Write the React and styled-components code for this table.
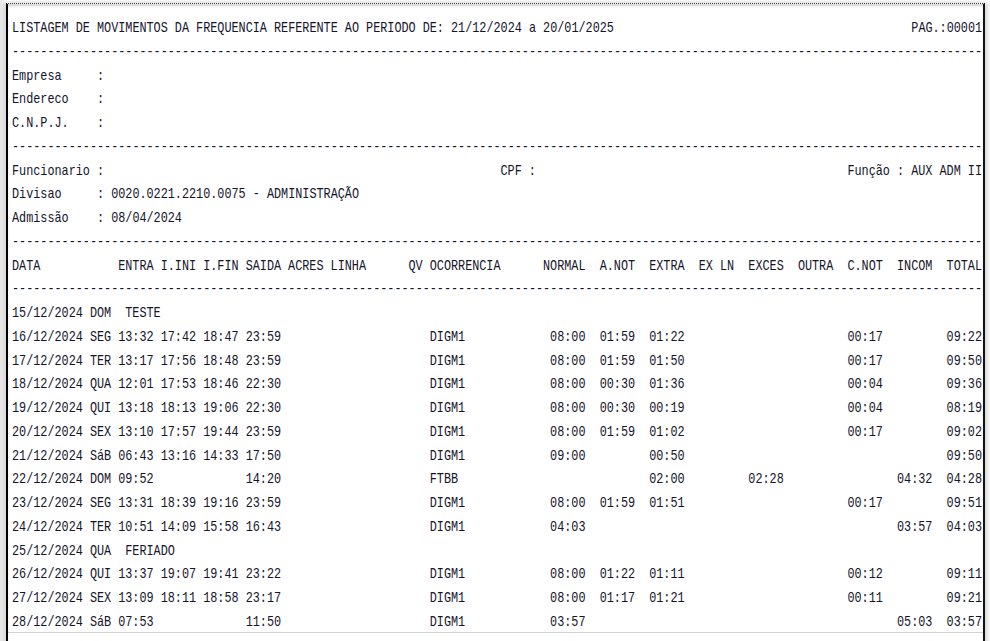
import React from "react";
import styled, { createGlobalStyle } from "styled-components";

const COLS = 137;
const SCALE = 7.08 / 9;

const Global = createGlobalStyle`
  html, body { margin: 0; padding: 0; background: #ffffff; overflow: hidden; }
  #root { width: 990px; height: 641px; }
`;

const Screen = styled.div`
  width: 990px;
  height: 641px;
  background: linear-gradient(90deg, #e9e9e9 0, #f7f7f7 6px, #ffffff 6px);
  position: relative;
  overflow: hidden;
`;

const Frame = styled.div`
  box-sizing: border-box;
  margin: 3px 0 0 6px;
  width: 979px;
  height: 660px;
  background: #ffffff;
  border-left: 2px solid #000000;
  border-right: 2px solid #111111;
  border-top: 1px dotted #3a3a3a;
  box-shadow: -3px 0 4px rgba(0, 0, 0, 0.12), 3px 0 4px rgba(0, 0, 0, 0.14),
    inset 0 3px 3px -1px rgba(0, 0, 0, 0.18);
`;

const Viewport = styled.div`
  height: 629px;
  border-bottom: 1px solid #d4d4d4;
  overflow: hidden;
  padding: 13px 0 0 4px;
  box-sizing: border-box;
`;

const Sheet = styled.div`
  width: ${COLS}ch;
  font-family: "Liberation Mono", "DejaVu Sans Mono", monospace;
  font-size: 15px;
  line-height: 23.76px;
  color: #14142a;
  transform: scaleX(${SCALE});
  transform-origin: 0 0;
  white-space: pre;
`;

const TitleBar = styled.div`
  display: flex;
  justify-content: space-between;
`;

const Rule = styled.div`
  overflow: hidden;
`;

const InfoRow = styled.div`
  display: grid;
  grid-template-columns: 12ch auto;
`;

const Row = styled.div`
  display: grid;
  grid-template-columns: repeat(${COLS}, 1ch);
  height: 23.76px;
`;

const Cell = styled.span`
  grid-column: ${(p) => p.$at + 1} / span ${(p) => p.$w};
  text-align: ${(p) => (p.$right ? "right" : "left")};
`;

const dashes = "-".repeat(COLS);

const header = [
  ["DATA", 0, 4],
  ["ENTRA", 15, 5],
  ["I.INI", 21, 5],
  ["I.FIN", 27, 5],
  ["SAIDA", 33, 5],
  ["ACRES", 39, 5],
  ["LINHA", 45, 5],
  ["QV", 56, 2],
  ["OCORRENCIA", 59, 10],
  ["NORMAL", 75, 6],
  ["A.NOT", 83, 5],
  ["EXTRA", 90, 5],
  ["EX LN", 97, 5],
  ["EXCES", 104, 5],
  ["OUTRA", 111, 5],
  ["C.NOT", 118, 5],
  ["INCOM", 125, 5],
  ["TOTAL", 132, 5],
];

const fields = [
  ["date", 0, 10],
  ["dow", 11, 3],
  ["entra", 15, 5],
  ["iini", 21, 5],
  ["ifin", 27, 5],
  ["saida", 33, 5],
  ["oc", 59, 10],
  ["normal", 75, 6, true],
  ["anot", 83, 5],
  ["extra", 90, 5],
  ["exces", 104, 5],
  ["cnot", 118, 5],
  ["incom", 125, 5],
  ["total", 132, 5],
];

const rows = [
  { date: "15/12/2024", dow: "DOM", note: "TESTE" },
  { date: "16/12/2024", dow: "SEG", entra: "13:32", iini: "17:42", ifin: "18:47", saida: "23:59", oc: "DIGM1", normal: "08:00", anot: "01:59", extra: "01:22", cnot: "00:17", total: "09:22" },
  { date: "17/12/2024", dow: "TER", entra: "13:17", iini: "17:56", ifin: "18:48", saida: "23:59", oc: "DIGM1", normal: "08:00", anot: "01:59", extra: "01:50", cnot: "00:17", total: "09:50" },
  { date: "18/12/2024", dow: "QUA", entra: "12:01", iini: "17:53", ifin: "18:46", saida: "22:30", oc: "DIGM1", normal: "08:00", anot: "00:30", extra: "01:36", cnot: "00:04", total: "09:36" },
  { date: "19/12/2024", dow: "QUI", entra: "13:18", iini: "18:13", ifin: "19:06", saida: "22:30", oc: "DIGM1", normal: "08:00", anot: "00:30", extra: "00:19", cnot: "00:04", total: "08:19" },
  { date: "20/12/2024", dow: "SEX", entra: "13:10", iini: "17:57", ifin: "19:44", saida: "23:59", oc: "DIGM1", normal: "08:00", anot: "01:59", extra: "01:02", cnot: "00:17", total: "09:02" },
  { date: "21/12/2024", dow: "SáB", entra: "06:43", iini: "13:16", ifin: "14:33", saida: "17:50", oc: "DIGM1", normal: "09:00", extra: "00:50", total: "09:50" },
  { date: "22/12/2024", dow: "DOM", entra: "09:52", saida: "14:20", oc: "FTBB", extra: "02:00", exces: "02:28", incom: "04:32", total: "04:28" },
  { date: "23/12/2024", dow: "SEG", entra: "13:31", iini: "18:39", ifin: "19:16", saida: "23:59", oc: "DIGM1", normal: "08:00", anot: "01:59", extra: "01:51", cnot: "00:17", total: "09:51" },
  { date: "24/12/2024", dow: "TER", entra: "10:51", iini: "14:09", ifin: "15:58", saida: "16:43", oc: "DIGM1", normal: "04:03", incom: "03:57", total: "04:03" },
  { date: "25/12/2024", dow: "QUA", note: "FERIADO" },
  { date: "26/12/2024", dow: "QUI", entra: "13:37", iini: "19:07", ifin: "19:41", saida: "23:22", oc: "DIGM1", normal: "08:00", anot: "01:22", extra: "01:11", cnot: "00:12", total: "09:11" },
  { date: "27/12/2024", dow: "SEX", entra: "13:09", iini: "18:11", ifin: "18:58", saida: "23:17", oc: "DIGM1", normal: "08:00", anot: "01:17", extra: "01:21", cnot: "00:11", total: "09:21" },
  { date: "28/12/2024", dow: "SáB", entra: "07:53", saida: "11:50", oc: "DIGM1", normal: "03:57", incom: "05:03", total: "03:57" },
];

function DataRow({ row }) {
  return (
    <Row>
      {fields.map(([key, at, w, right]) =>
        row[key] ? (
          <Cell key={key} $at={at} $w={w} $right={right}>
            {row[key]}
          </Cell>
        ) : null
      )}
      {row.note && (
        <Cell $at={16} $w={20}>
          {row.note}
        </Cell>
      )}
    </Row>
  );
}

export default function App() {
  return (
    <Screen>
      <Global />
      <Frame>
        <Viewport>
          <Sheet>
            <TitleBar>
              <span>LISTAGEM DE MOVIMENTOS DA FREQUENCIA REFERENTE AO PERIODO DE: 21/12/2024 a 20/01/2025</span>
              <span>PAG.:00001</span>
            </TitleBar>
            <Rule>{dashes}</Rule>
            <InfoRow><span>Empresa</span><span>:</span></InfoRow>
            <InfoRow><span>Endereco</span><span>:</span></InfoRow>
            <InfoRow><span>C.N.P.J.</span><span>:</span></InfoRow>
            <Rule>{dashes}</Rule>
            <Row>
              <Cell $at={0} $w={13}>Funcionario :</Cell>
              <Cell $at={69} $w={5}>CPF :</Cell>
              <Cell $at={118} $w={19}>Função : AUX ADM II</Cell>
            </Row>
            <InfoRow><span>Divisao</span><span>: 0020.0221.2210.0075 - ADMINISTRAÇÃO</span></InfoRow>
            <InfoRow><span>Admissão</span><span>: 08/04/2024</span></InfoRow>
            <Rule>{dashes}</Rule>
            <Row>
              {header.map(([t, at, w]) => (
                <Cell key={t} $at={at} $w={w}>{t}</Cell>
              ))}
            </Row>
            <Rule>{dashes}</Rule>
            {rows.map((r) => (
              <DataRow key={r.date} row={r} />
            ))}
          </Sheet>
        </Viewport>
      </Frame>
    </Screen>
  );
}
